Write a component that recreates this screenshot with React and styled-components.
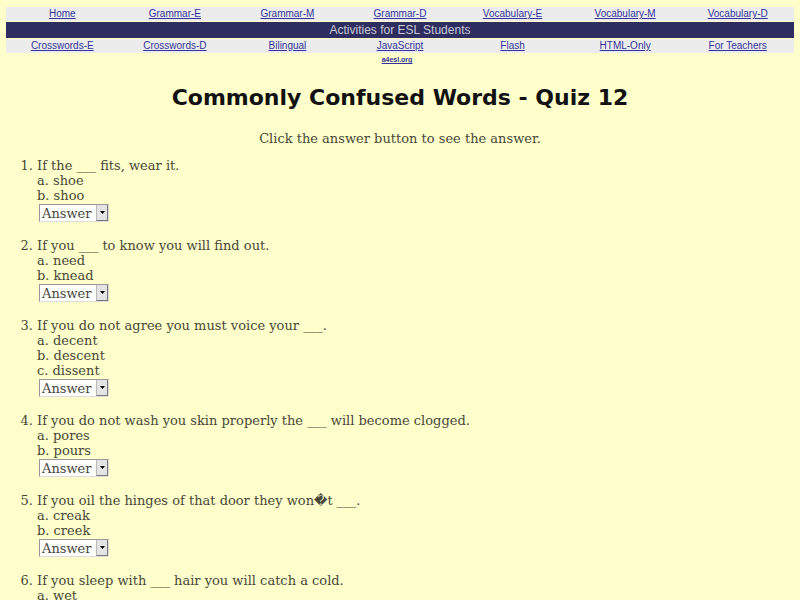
import React from "react";
import styled, { createGlobalStyle } from "styled-components";

const topLinks = [
  "Home",
  "Grammar-E",
  "Grammar-M",
  "Grammar-D",
  "Vocabulary-E",
  "Vocabulary-M",
  "Vocabulary-D",
];

const bottomLinks = [
  "Crosswords-E",
  "Crosswords-D",
  "Bilingual",
  "JavaScript",
  "Flash",
  "HTML-Only",
  "For Teachers",
];

const questions = [
  { text: "If the ___ fits, wear it.", options: ["shoe", "shoo"] },
  { text: "If you ___ to know you will find out.", options: ["need", "knead"] },
  {
    text: "If you do not agree you must voice your ___.",
    options: ["decent", "descent", "dissent"],
  },
  {
    text: "If you do not wash you skin properly the ___ will become clogged.",
    options: ["pores", "pours"],
  },
  {
    text: "If you oil the hinges of that door they won\uFFFDt ___.",
    options: ["creak", "creek"],
  },
  {
    text: "If you sleep with ___ hair you will catch a cold.",
    options: ["wet", "whet"],
  },
];

const GlobalStyle = createGlobalStyle`
  html, body {
    margin: 0;
    background: #ffffcc;
  }
  body {
    font-family: "DejaVu Serif", "Liberation Serif", serif;
    color: #474739;
  }
`;

const Page = styled.div`
  padding: 7px 6px 0;
`;

const NavTable = styled.div`
  display: flex;
  flex-direction: column;
  gap: 1px;
`;

const NavRow = styled.div`
  display: grid;
  grid-template-columns: repeat(7, 1fr);
  background: #ececec;
  height: 14px;
  align-items: center;
`;

const NavLink = styled.a`
  font-family: "Liberation Sans", Arial, sans-serif;
  font-size: 10px;
  color: #333399;
  text-align: center;
  text-decoration: underline;
  line-height: 14px;
`;

const Banner = styled.div`
  background: #2d2d5f;
  color: #c9c9d9;
  font-family: "Liberation Sans", Arial, sans-serif;
  font-size: 12px;
  text-align: center;
  height: 16px;
  line-height: 16px;
`;

const SiteLink = styled.a`
  display: block;
  text-align: center;
  font-family: "Liberation Sans", Arial, sans-serif;
  font-size: 7px;
  font-weight: bold;
  color: #333399;
  text-decoration: underline;
  margin: 2px 0 0 -6px;
  line-height: 9px;
`;

const Title = styled.h1`
  font-family: "DejaVu Sans", "Liberation Sans", sans-serif;
  font-weight: bold;
  font-size: 22px;
  color: #111;
  text-align: center;
  margin: 19px 0 0;
  line-height: 30px;
`;

const Hint = styled.p`
  text-align: center;
  font-size: 13px;
  margin: 18px 0 0;
  line-height: 15px;
`;

const QuizList = styled.ol`
  margin: 12px 0 0;
  padding-left: 31px;
  font-size: 13px;
  line-height: 15px;
`;

const Question = styled.li`
  margin-bottom: 16px;
`;

const Option = styled.div``;

const AnswerBox = styled.label`
  display: flex;
  width: fit-content;
  margin: 1px 0 0 2px;
  height: 16px;
  background: #fff;
  border: 1px solid #999;
  border-right-color: #ddd;
  border-bottom-color: #ddd;
`;

const AnswerSelect = styled.select`
  appearance: none;
  border: none;
  background: transparent;
  font-family: "DejaVu Serif", "Liberation Serif", serif;
  font-size: 13px;
  color: #474739;
  padding: 0 2px;
  width: 56px;
  height: 16px;
  outline: none;
`;

const Arrow = styled.span`
  display: flex;
  align-items: center;
  justify-content: center;
  width: 10px;
  background: #e4e4e4;
  border-left: 1px solid #bbb;
  border-right: 1px solid #777;
  border-bottom: 1px solid #777;
  svg {
    display: block;
  }
`;

const letters = "abcdefgh";

const QuizItem = ({ q }) => (
  <Question>
    {q.text}
    {q.options.map((opt, i) => (
      <Option key={opt}>
        {letters[i]}. {opt}
      </Option>
    ))}
    <AnswerBox>
      <AnswerSelect defaultValue="">
        <option value="">Answer</option>
        {q.options.map((opt) => (
          <option key={opt}>{opt}</option>
        ))}
      </AnswerSelect>
      <Arrow>
        <svg width="5" height="3" viewBox="0 0 5 3">
          <path d="M0 0h5L2.5 3z" fill="#000" />
        </svg>
      </Arrow>
    </AnswerBox>
  </Question>
);

export default function App() {
  return (
    <>
      <GlobalStyle />
      <Page>
        <NavTable>
          <NavRow>
            {topLinks.map((l) => (
              <NavLink key={l} href="#">
                {l}
              </NavLink>
            ))}
          </NavRow>
          <Banner>Activities for ESL Students</Banner>
          <NavRow>
            {bottomLinks.map((l) => (
              <NavLink key={l} href="#">
                {l}
              </NavLink>
            ))}
          </NavRow>
        </NavTable>
        <SiteLink href="#">a4esl.org</SiteLink>
        <Title>Commonly Confused Words - Quiz 12</Title>
        <Hint>Click the answer button to see the answer.</Hint>
        <QuizList>
          {questions.map((q) => (
            <QuizItem key={q.text} q={q} />
          ))}
        </QuizList>
      </Page>
    </>
  );
}
